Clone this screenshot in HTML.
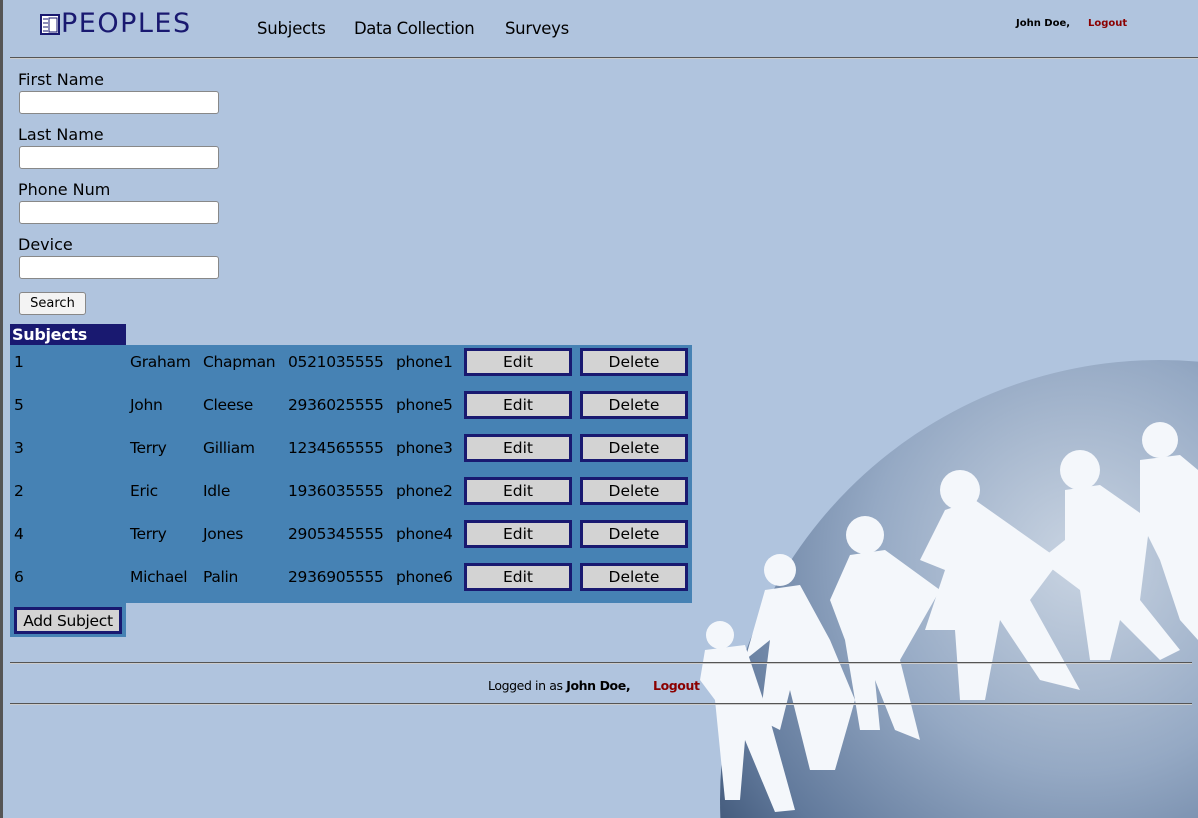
<!DOCTYPE html>
<html><head><meta charset="utf-8"><style>
*{margin:0;padding:0;box-sizing:border-box}
html,body{width:1198px;height:818px;overflow:hidden}
body{background:#b0c4de;font-family:"DejaVu Sans","Liberation Sans",sans-serif;position:relative;color:#000}
.lb{position:absolute;left:0;top:0;width:3px;height:818px;background:#555}
.a{position:absolute;white-space:nowrap}
.hr{position:absolute;height:2px;background:#555;border-bottom:1px solid #ccc}
.inp{position:absolute;left:19px;width:200px;height:23px;background:#fff;border:1px solid #888;border-radius:3px}
.lbl{position:absolute;left:18px;font-size:16px}
.btn{position:absolute;width:108px;height:28px;background:#d3d3d3;border:3px solid #191970;font-size:15.5px;text-align:center;line-height:22px}
.cell{position:absolute;font-size:15.5px;letter-spacing:-0.3px}
</style></head><body>
<svg class="a" style="left:0;top:0" width="1198" height="818">
<defs><radialGradient id="g" gradientUnits="userSpaceOnUse" cx="1080" cy="560" r="470"><stop offset="0" stop-color="#c9d4e2"/><stop offset="0.45" stop-color="#95a9c4"/><stop offset="0.8" stop-color="#61799b"/><stop offset="1" stop-color="#3a5172"/></radialGradient></defs>
<circle cx="1160" cy="800" r="440" fill="url(#g)"/>
<g fill="#f4f7fb">
<circle cx="720" cy="635" r="14"/><polygon points="705,650 745,645 770,720 795,810 775,812 745,740 740,800 725,800 715,700 700,680"/>
<circle cx="780" cy="570" r="16"/><polygon points="765,590 800,585 830,640 855,700 835,770 810,770 790,690 780,730 760,720 770,640 745,660"/>
<circle cx="865" cy="535" r="19"/><polygon points="850,555 885,550 940,590 900,660 920,740 895,730 875,680 880,730 860,730 845,640 830,600"/>
<circle cx="960" cy="490" r="20"/><polygon points="945,510 975,500 1060,560 1030,600 1080,690 1040,680 1000,620 985,700 960,700 955,630 925,630 945,570 920,560"/>
<circle cx="1080" cy="470" r="20"/><polygon points="1065,490 1100,485 1150,520 1140,600 1180,650 1160,660 1120,620 1110,660 1090,660 1080,590 1040,560 1065,540"/>
<circle cx="1160" cy="440" r="18"/><polygon points="1140,460 1180,455 1198,470 1198,640 1180,620 1160,560 1140,520"/>
</g>
</svg>
<div class="lb"></div>
<svg class="a" style="left:40px;top:14px" width="20" height="22"><rect x="1" y="1" width="18" height="19" fill="#fff" stroke="#191970" stroke-width="2"/><rect x="9" y="4" width="8" height="14" fill="none" stroke="#191970"/><path d="M3 5h5M3 9h5M3 13h5M3 17h5" stroke="#191970"/></svg>
<div class="a" style="left:61px;top:8px;font-size:27px;color:#191970;letter-spacing:1.5px">PEOPLES</div>
<div class="a" style="left:257px;top:19px;font-size:16.5px;letter-spacing:-0.2px">Subjects</div>
<div class="a" style="left:354px;top:19px;font-size:16.5px;letter-spacing:-0.4px">Data Collection</div>
<div class="a" style="left:505px;top:19px;font-size:16.5px;letter-spacing:-0.3px">Surveys</div>
<div class="a" style="left:1016px;top:18px;font-size:10px;font-weight:bold">John Doe,</div>
<div class="a" style="left:1088px;top:18px;font-size:10px;font-weight:bold;color:#8b0000">Logout</div>
<div class="hr" style="left:10px;top:57px;width:1188px"></div>
<div class="lbl" style="top:70px">First Name</div><div class="inp" style="top:91px"></div>
<div class="lbl" style="top:125px">Last Name</div><div class="inp" style="top:146px"></div>
<div class="lbl" style="top:180px">Phone Num</div><div class="inp" style="top:201px"></div>
<div class="lbl" style="top:235px">Device</div><div class="inp" style="top:256px"></div>
<div class="a" style="left:19px;top:292px;width:67px;height:23px;background:#f3f3f3;border:1px solid #888;border-radius:3px;font-size:13px;text-align:center;line-height:21px">Search</div>
<div class="a" style="left:10px;top:324px;width:116px;height:21px;background:#191970;color:#fff;font-weight:bold;font-size:16px;padding-left:2px;line-height:21px;letter-spacing:-0.3px">Subjects</div>
<div class="a" style="left:10px;top:345px;width:682px;height:258px;background:#4682b4"></div>
<div class="a" style="left:10px;top:603px;width:116px;height:34px;background:#4682b4"></div>
<div class="btn" style="left:14px;top:607px;height:27px;letter-spacing:-0.3px">Add Subject</div>
<div class="hr" style="left:10px;top:662px;width:1182px"></div>
<div class="a" style="left:488px;top:678px;font-size:12.5px;letter-spacing:-0.4px">Logged in as <b>John Doe,</b></div>
<div class="a" style="left:653px;top:678px;font-size:12.5px;font-weight:bold;color:#8b0000;letter-spacing:-0.4px">Logout</div>
<div class="hr" style="left:10px;top:703px;width:1182px"></div>
<div class="cell" style="left:14px;top:353px">1</div><div class="cell" style="left:130px;top:353px">Graham</div><div class="cell" style="left:203px;top:353px">Chapman</div><div class="cell" style="left:288px;top:353px">0521035555</div><div class="cell" style="left:396px;top:353px">phone1</div><div class="btn" style="left:464px;top:348px">Edit</div><div class="btn" style="left:580px;top:348px">Delete</div>
<div class="cell" style="left:14px;top:396px">5</div><div class="cell" style="left:130px;top:396px">John</div><div class="cell" style="left:203px;top:396px">Cleese</div><div class="cell" style="left:288px;top:396px">2936025555</div><div class="cell" style="left:396px;top:396px">phone5</div><div class="btn" style="left:464px;top:391px">Edit</div><div class="btn" style="left:580px;top:391px">Delete</div>
<div class="cell" style="left:14px;top:439px">3</div><div class="cell" style="left:130px;top:439px">Terry</div><div class="cell" style="left:203px;top:439px">Gilliam</div><div class="cell" style="left:288px;top:439px">1234565555</div><div class="cell" style="left:396px;top:439px">phone3</div><div class="btn" style="left:464px;top:434px">Edit</div><div class="btn" style="left:580px;top:434px">Delete</div>
<div class="cell" style="left:14px;top:482px">2</div><div class="cell" style="left:130px;top:482px">Eric</div><div class="cell" style="left:203px;top:482px">Idle</div><div class="cell" style="left:288px;top:482px">1936035555</div><div class="cell" style="left:396px;top:482px">phone2</div><div class="btn" style="left:464px;top:477px">Edit</div><div class="btn" style="left:580px;top:477px">Delete</div>
<div class="cell" style="left:14px;top:525px">4</div><div class="cell" style="left:130px;top:525px">Terry</div><div class="cell" style="left:203px;top:525px">Jones</div><div class="cell" style="left:288px;top:525px">2905345555</div><div class="cell" style="left:396px;top:525px">phone4</div><div class="btn" style="left:464px;top:520px">Edit</div><div class="btn" style="left:580px;top:520px">Delete</div>
<div class="cell" style="left:14px;top:568px">6</div><div class="cell" style="left:130px;top:568px">Michael</div><div class="cell" style="left:203px;top:568px">Palin</div><div class="cell" style="left:288px;top:568px">2936905555</div><div class="cell" style="left:396px;top:568px">phone6</div><div class="btn" style="left:464px;top:563px">Edit</div><div class="btn" style="left:580px;top:563px">Delete</div>
</body></html>
